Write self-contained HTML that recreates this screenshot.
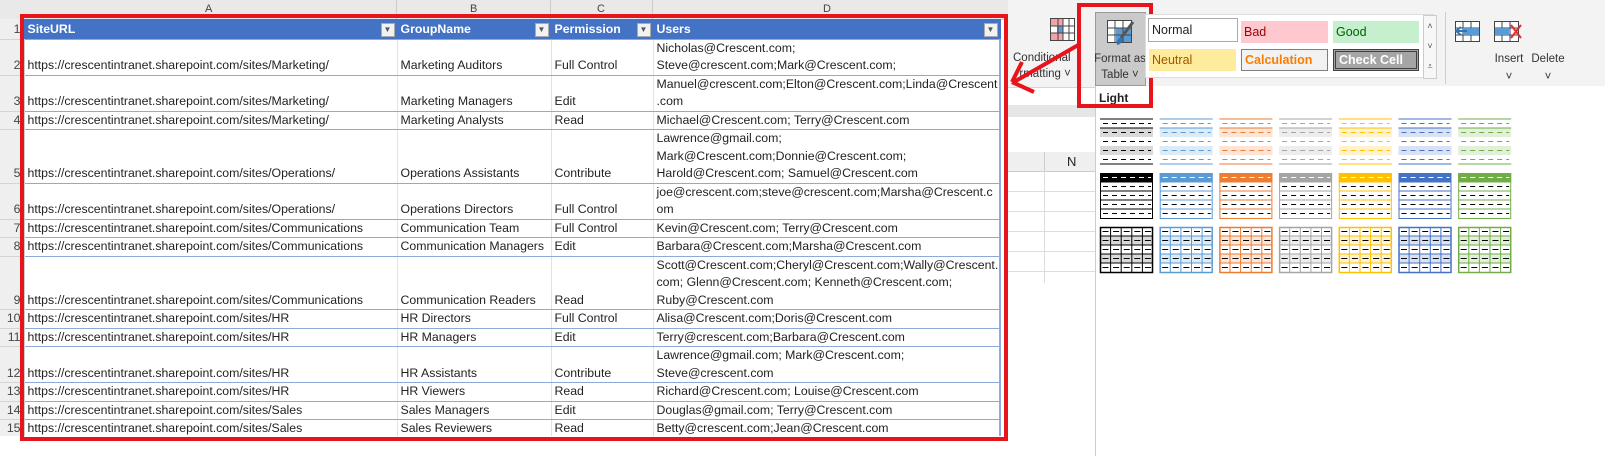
<!DOCTYPE html><html><head><style>
body{margin:0;width:1605px;height:456px;position:relative;overflow:hidden;background:#fff;font-family:"Liberation Sans",sans-serif;font-size:12.3px;color:#222}
.a{position:absolute}
table{border-collapse:collapse;position:absolute;left:0;top:19px;table-layout:fixed}
td{padding:0 0 0 3px;vertical-align:bottom;white-space:nowrap;overflow:hidden;line-height:17.5px;border-right:1px solid #e2e2e2;border-bottom:1px solid #8ea9db}
td.n{background:#efefef;text-align:right;padding-right:3px;border-bottom:1px solid #d4d4d4;border-right:1px solid #ccc;color:#444}
tr.h td{background:#4472c4;color:#fff;font-weight:bold;border-right:1px solid #4472c4}
tr.h td.n{background:#efefef;color:#444;font-weight:normal}
.dd{float:right;width:12px;height:12px;background:#f2f2f2;border:1px solid #aaa;margin:2px 2px 0 0;font-size:8px;color:#555;text-align:center;line-height:12px}
.st{position:absolute;font-size:12.5px;padding-left:3px;line-height:22px;box-sizing:border-box}
</style></head><body>
<div class="a" style="left:0;top:0;width:1008px;height:19px;background:#e9e9e9;border-bottom:1px solid #ccc"></div>
<div class="a" style="left:205px;top:3px;font-size:11px;color:#444">A</div>
<div class="a" style="left:470px;top:3px;font-size:11px;color:#444">B</div>
<div class="a" style="left:597px;top:3px;font-size:11px;color:#444">C</div>
<div class="a" style="left:823px;top:3px;font-size:11px;color:#444">D</div>
<div class="a" style="left:396px;top:0;width:1px;height:19px;background:#ccc"></div>
<div class="a" style="left:550px;top:0;width:1px;height:19px;background:#ccc"></div>
<div class="a" style="left:652px;top:0;width:1px;height:19px;background:#ccc"></div>
<table>
<colgroup><col style="width:24px"><col style="width:373px"><col style="width:154px"><col style="width:102px"><col style="width:347px"></colgroup>
<tr class="h" style="height:20px"><td class="n">1</td><td>SiteURL<span class="dd">▼</span></td><td>GroupName<span class="dd">▼</span></td><td>Permission<span class="dd">▼</span></td><td style="border-right:1px solid #4472c4">Users<span class="dd">▼</span></td></tr>
<tr style="height:35px"><td class="n">2</td><td>https://crescentintranet.sharepoint.com/sites/Marketing/</td><td>Marketing Auditors</td><td>Full Control</td><td>Nicholas@Crescent.com;<br>Steve@crescent.com;Mark@Crescent.com;</td></tr>
<tr style="height:35px"><td class="n">3</td><td>https://crescentintranet.sharepoint.com/sites/Marketing/</td><td>Marketing Managers</td><td>Edit</td><td>Manuel@crescent.com;Elton@Crescent.com;Linda@Crescent<br>.com</td></tr>
<tr style="height:17px"><td class="n">4</td><td>https://crescentintranet.sharepoint.com/sites/Marketing/</td><td>Marketing Analysts</td><td>Read</td><td>Michael@Crescent.com; Terry@Crescent.com</td></tr>
<tr style="height:53px"><td class="n">5</td><td>https://crescentintranet.sharepoint.com/sites/Operations/</td><td>Operations Assistants</td><td>Contribute</td><td>Lawrence@gmail.com;<br>Mark@Crescent.com;Donnie@Crescent.com;<br>Harold@Crescent.com; Samuel@Crescent.com</td></tr>
<tr style="height:35px"><td class="n">6</td><td>https://crescentintranet.sharepoint.com/sites/Operations/</td><td>Operations Directors</td><td>Full Control</td><td>joe@crescent.com;steve@crescent.com;Marsha@Crescent.c<br>om</td></tr>
<tr style="height:16px"><td class="n">7</td><td>https://crescentintranet.sharepoint.com/sites/Communications</td><td>Communication Team</td><td>Full Control</td><td>Kevin@Crescent.com; Terry@Crescent.com</td></tr>
<tr style="height:17px"><td class="n">8</td><td>https://crescentintranet.sharepoint.com/sites/Communications</td><td>Communication Managers</td><td>Edit</td><td>Barbara@Crescent.com;Marsha@Crescent.com</td></tr>
<tr style="height:53px"><td class="n">9</td><td>https://crescentintranet.sharepoint.com/sites/Communications</td><td>Communication Readers</td><td>Read</td><td>Scott@Crescent.com;Cheryl@Crescent.com;Wally@Crescent.<br>com; Glenn@Crescent.com; Kenneth@Crescent.com;<br>Ruby@Crescent.com</td></tr>
<tr style="height:17px"><td class="n">10</td><td>https://crescentintranet.sharepoint.com/sites/HR</td><td>HR Directors</td><td>Full Control</td><td>Alisa@Crescent.com;Doris@Crescent.com</td></tr>
<tr style="height:17px"><td class="n">11</td><td>https://crescentintranet.sharepoint.com/sites/HR</td><td>HR Managers</td><td>Edit</td><td>Terry@crescent.com;Barbara@Crescent.com</td></tr>
<tr style="height:35px"><td class="n">12</td><td>https://crescentintranet.sharepoint.com/sites/HR</td><td>HR Assistants</td><td>Contribute</td><td>Lawrence@gmail.com; Mark@Crescent.com;<br>Steve@crescent.com</td></tr>
<tr style="height:17px"><td class="n">13</td><td>https://crescentintranet.sharepoint.com/sites/HR</td><td>HR Viewers</td><td>Read</td><td>Richard@Crescent.com; Louise@Crescent.com</td></tr>
<tr style="height:17px"><td class="n">14</td><td>https://crescentintranet.sharepoint.com/sites/Sales</td><td>Sales Managers</td><td>Edit</td><td>Douglas@gmail.com; Terry@Crescent.com</td></tr>
<tr style="height:17px"><td class="n">15</td><td>https://crescentintranet.sharepoint.com/sites/Sales</td><td>Sales Reviewers</td><td>Read</td><td>Betty@crescent.com;Jean@Crescent.com</td></tr>
</table>
<div class="a" style="left:0;top:436px;width:1008px;height:20px;background:#fff"></div>
<div class="a" style="left:999px;top:40px;width:2px;height:396px;background:#8ea9db"></div>
<div class="a" style="left:20px;top:14px;width:980px;height:419px;border:4px solid #e8141c"></div>

<div class="a" style="left:1008px;top:0;width:597px;height:87px;background:#f3f3f3;border-bottom:1px solid #d6d6d6"></div>
<div class="a" style="left:1008px;top:88px;width:87px;height:368px;background:#fff"></div>
<div class="a" style="left:1008px;top:105px;width:87px;height:12px;background:#e6e6e6"></div>
<div class="a" style="left:1008px;top:152px;width:87px;height:19px;background:#efefef;border-bottom:1px solid #ccc"></div>
<div class="a" style="left:1044px;top:152px;width:1px;height:19px;background:#ccc"></div>
<div class="a" style="left:1067px;top:154px;font-size:13px">N</div>
<div class="a" style="left:1008px;top:191px;width:87px;height:1px;background:#ddd"></div>
<div class="a" style="left:1008px;top:211px;width:87px;height:1px;background:#ddd"></div>
<div class="a" style="left:1008px;top:231px;width:87px;height:1px;background:#ddd"></div>
<div class="a" style="left:1008px;top:251px;width:87px;height:1px;background:#ddd"></div>
<div class="a" style="left:1008px;top:271px;width:87px;height:1px;background:#ddd"></div>
<div class="a" style="left:1044px;top:171px;width:1px;height:112px;background:#ddd"></div>
<div class="a" style="left:1095px;top:86px;width:510px;height:370px;background:#fff;border-left:1px solid #ccc"></div>
<svg class="a" style="left:1050px;top:18px" width="26" height="24"><rect x="0.5" y="0.5" width="24" height="22" fill="#fff" stroke="#444"/><rect x="1" y="1" width="12" height="7" fill="#f4a1a7"/><rect x="7" y="8" width="6" height="7" fill="#5b9bd5"/><rect x="1" y="15" width="12" height="7" fill="#f4a1a7"/><path d="M8 1V22M13 1V22M19 1V22M1 8H24M1 15H24" stroke="#444"/></svg>
<div class="a" style="left:1013px;top:50px;font-size:11.5px;color:#333;line-height:16px;white-space:nowrap">Conditional<br>&nbsp;&nbsp;rmatting ˅</div>
<div class="a" style="left:1095px;top:12px;width:49px;height:72px;background:#cacaca;border:1px solid #9a9a9a"></div>
<svg class="a" style="left:1107px;top:20px" width="28" height="26"><rect x="0.5" y="0.5" width="24" height="22" fill="#fff" stroke="#444"/><rect x="9" y="8" width="15" height="14" fill="#5b9bd5"/><path d="M8 1V22M16 1V22M1 8H24M1 15H24" stroke="#444"/><path d="M26 2 L14 18" stroke="#555" stroke-width="3"/><path d="M14 17 Q9 19 10 25 Q15 24 16 19Z" fill="#2e75b6"/></svg>
<div class="a" style="left:1093px;top:51px;width:54px;text-align:center;font-size:11.5px;color:#333;line-height:16px;white-space:nowrap">Format as<br>Table ˅</div>
<div class="a" style="left:1099px;top:91px;font-size:12px;font-weight:bold;color:#222">Light</div>
<div class="a" style="left:1077px;top:3px;width:68px;height:97px;border:4px solid #e8141c"></div>
<div class="a" style="left:1145px;top:14px;width:287px;height:62px;background:#fff;border:1px solid #ddd"></div>
<div class="st" style="left:1148px;top:18px;width:90px;height:24px;background:#fff;border:1px solid #aaa">Normal</div>
<div class="st" style="left:1241px;top:21px;width:87px;height:22px;background:#ffc7ce;color:#9c0006">Bad</div>
<div class="st" style="left:1333px;top:21px;width:86px;height:22px;background:#c6efce;color:#006100">Good</div>
<div class="st" style="left:1149px;top:49px;width:87px;height:22px;background:#ffeb9c;color:#9c5700">Neutral</div>
<div class="st" style="left:1241px;top:49px;width:87px;height:22px;background:#f2f2f2;border:1px solid #7f7f7f;color:#fa7d00;font-weight:bold;line-height:20px">Calculation</div>
<div class="st" style="left:1333px;top:49px;width:86px;height:22px;background:#a5a5a5;border:3px double #3f3f3f;color:#fff;font-weight:bold;line-height:16px">Check Cell</div>
<div class="a" style="left:1423px;top:15px;width:12px;height:62px;background:#f7f7f7;border:1px solid #ccc;font-size:9px;color:#555;text-align:center;line-height:20px">˄<br>˅<br>⩡</div>
<div class="a" style="left:1445px;top:12px;width:1px;height:72px;background:#ccc"></div>
<svg class="a" style="left:1455px;top:18px" width="130" height="26"><rect x="0.5" y="3.5" width="24" height="20" fill="#fff" stroke="#444"/><path d="M8 3V23M16 3V23M1 10H24M1 17H24" stroke="#444"/><rect x="8" y="10" width="16" height="7" fill="#5b9bd5"/><path d="M12 13H2M6 9L1 13L6 17" stroke="#2e75b6" stroke-width="2" fill="none"/>
<g transform="translate(39,0)"><rect x="0.5" y="3.5" width="24" height="20" fill="#fff" stroke="#444"/><path d="M8 3V23M16 3V23M1 10H24M1 17H24" stroke="#444"/><rect x="1" y="10" width="14" height="7" fill="#5b9bd5"/><path d="M17 7L27 20M27 7L17 20" stroke="#e03030" stroke-width="2"/></g></svg>
<div class="a" style="left:1491px;top:50px;font-size:11.5px;color:#333;text-align:center;width:36px;line-height:18px">Insert<br>˅</div>
<div class="a" style="left:1529px;top:50px;font-size:11.5px;color:#333;text-align:center;width:38px;line-height:18px">Delete<br>˅</div>
<svg class="a" style="left:1095px;top:110px" width="510" height="170" id="g"></svg>
<script>
var C=[["#000","#d9d9d9"],["#5b9bd5","#ddebf7"],["#ed7d31","#fce4d6"],["#a5a5a5","#ededed"],["#ffc000","#fff2cc"],["#4472c4","#d9e1f2"],["#70ad47","#e2efda"]];
var s="";
for(var i=0;i<7;i++){var x=5+i*59.7,c=C[i][0],l=C[i][1];
var y=9;s+='<rect x="'+x+'" y="'+(y+9)+'" width="53" height="9" fill="'+l+'"/><rect x="'+x+'" y="'+(y+27)+'" width="53" height="9" fill="'+l+'"/>';
s+='<path d="M'+x+' '+y+'h53M'+x+' '+(y+9)+'h53M'+x+' '+(y+45)+'h53" stroke="'+c+'"/>';
for(var r=0;r<5;r++)s+='<path d="M'+(x+3)+' '+(y+4.5+r*9)+'h48" stroke="'+c+'" stroke-dasharray="5 4"/>';
y=63;s+='<rect x="'+(x+.5)+'" y="'+(y+.5)+'" width="52" height="45" fill="#fff" stroke="'+c+'"/><rect x="'+x+'" y="'+y+'" width="53" height="9" fill="'+c+'"/>';
for(r=1;r<5;r++)s+='<path d="M'+x+' '+(y+r*9)+'h53" stroke="'+c+'"/>';
for(r=0;r<5;r++)s+='<path d="M'+(x+3)+' '+(y+4.5+r*9)+'h48" stroke="'+(r==0?'#fff':'#000')+'" stroke-dasharray="5 4"/>';
y=117;s+='<rect x="'+x+'" y="'+(y+9)+'" width="53" height="9" fill="'+l+'"/><rect x="'+x+'" y="'+(y+27)+'" width="53" height="9" fill="'+l+'"/><rect x="'+(x+.5)+'" y="'+(y+.5)+'" width="52" height="45" fill="none" stroke="'+c+'" stroke-width="1.5"/>';
for(r=1;r<5;r++)s+='<path d="M'+x+' '+(y+r*9)+'h53" stroke="'+c+'"/>';
for(r=1;r<5;r++)s+='<path d="M'+(x+r*10.6)+' '+y+'v45" stroke="'+c+'"/>';
for(r=0;r<5;r++)for(var k=0;k<5;k++)s+='<path d="M'+(x+2.5+k*10.6)+' '+(y+4.5+r*9)+'h6" stroke="#000"/>';
}
document.getElementById("g").innerHTML=s;
</script>
<svg class="a" style="left:1000px;top:30px" width="90" height="70"><path d="M80 14L14 52M12 52L34 62M12 52L22 32" stroke="#e8141c" stroke-width="4" fill="none"/></svg>
</body></html>
